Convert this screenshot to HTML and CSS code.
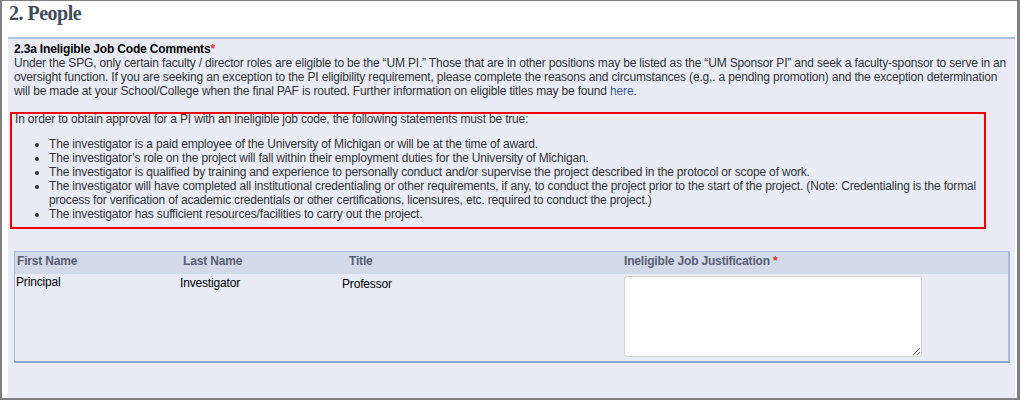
FILE: index.html
```html
<!DOCTYPE html>
<html>
<head>
<meta charset="utf-8">
<link rel="stylesheet" href="styles.css">
</head>
<body>
<div class="frame">
  <h2 class="page-title">2. People</h2>
  <div class="panel">
    <div class="q-title">2.3a Ineligible Job Code Comments<span class="req">*</span></div>
    <p class="q-desc">Under the SPG, only certain faculty / director roles are eligible to be the “UM PI.” Those that are in other positions may be listed as the “UM Sponsor PI” and seek a faculty-sponsor to serve in an oversight function. If you are seeking an exception to the PI eligibility requirement, please complete the reasons and circumstances (e.g,. a pending promotion) and the exception determination will be made at your School/College when the final PAF is routed. Further information on eligible titles may be found <a class="link" href="#">here</a>.</p>
    <div class="notice">
      <div class="notice-intro">In order to obtain approval for a PI with an ineligible job code, the following statements must be true:</div>
      <ul class="notice-list">
        <li>The investigator is a paid employee of the University of Michigan or will be at the time of award.</li>
        <li>The investigator’s role on the project will fall within their employment duties for the University of Michigan.</li>
        <li>The investigator is qualified by training and experience to personally conduct and/or supervise the project described in the protocol or scope of work.</li>
        <li>The investigator will have completed all institutional credentialing or other requirements, if any, to conduct the project prior to the start of the project. (Note: Credentialing is the formal process for verification of academic credentials or other certifications, licensures, etc. required to conduct the project.)</li>
        <li>The investigator has sufficient resources/facilities to carry out the project.</li>
      </ul>
    </div>
    <div class="grid">
      <div class="grid-head">
        <div class="th">First Name</div>
        <div class="th">Last Name</div>
        <div class="th">Title</div>
        <div class="th">Ineligible Job Justification <span class="req">*</span></div>
      </div>
      <div class="grid-row">
        <div class="td">Principal</div>
        <div class="td td-2">Investigator</div>
        <div class="td td-3">Professor</div>
        <div class="td-area"><textarea class="justify"></textarea></div>
      </div>
    </div>
  </div>
</div>
</body>
</html>
```
FILE: styles.css
```css
html, body {
  margin: 0;
  padding: 0;
  background: #ffffff;
}

.frame {
  width: 1020px;
  height: 400px;
  box-sizing: border-box;
  border-style: solid;
  border-color: #7f7f7f;
  border-width: 1px 3px 2px 2px;
  padding: 0 2px 0 6px;
  display: flex;
  flex-direction: column;
  background: #ffffff;
  font-family: "Liberation Sans", Arial, sans-serif;
  font-size: 12px;
  letter-spacing: -0.17px;
  color: #333333;
}

.page-title {
  margin: 1px 0 12px 0;
  padding-left: 1px;
  font-family: "Liberation Serif", "Times New Roman", serif;
  font-size: 20px;
  line-height: 23px;
  font-weight: bold;
  letter-spacing: -0.5px;
  color: #3f4b5d;
}

.panel {
  flex: 1;
  background: #e9ecf7;
  border-top: 2px solid #adc1e6;
  padding: 3px 5px 0 6px;
}

.q-title {
  font-weight: bold;
  color: #000000;
}

.req {
  color: #e8302f;
  font-weight: bold;
}

.q-desc {
  margin: 0;
  color: #333333;
}

.link {
  color: #3b5b9c;
  text-decoration: none;
}

.notice {
  margin: 14px 0 0 -4px;
  width: 976px;
  box-sizing: border-box;
  border: 2px solid #f00000;
  padding: 0 2px 0 3px;
  color: #333333;
}

.notice-intro {
  margin-top: -2px;
}

.notice-list {
  margin: 11px 0 6px 0;
  padding-left: 34px;
}

.grid {
  margin-top: 22px;
  border: 1px solid #a7bbdf;
  border-right: 2px solid #a7bbdf;
  border-bottom: 2px solid #8fa3c8;
}

.grid-head {
  display: grid;
  grid-template-columns: 166px 166px 275px 1fr;
  height: 22px;
  box-sizing: border-box;
  padding: 2px 0 0 2px;
  background: #d1dae6;
}

.th {
  font-weight: bold;
  color: #5a5f76;
}

.grid-row {
  display: grid;
  grid-template-columns: 164px 162px 282px 1fr;
  padding: 1px 0 4px 1px;
}

.td {
  color: #000000;
}

.td-2 {
  padding-top: 1px;
}

.td-3 {
  padding-top: 2px;
}

.td-area {
  padding-top: 1px;
}

.justify {
  display: block;
  width: 298px;
  height: 81px;
  box-sizing: border-box;
  margin: 0;
  border: 1px solid #d0d0d0;
  border-radius: 3px;
  box-shadow: 0 0 1px #dddddd;
  background: #ffffff;
  font-family: "Liberation Sans", Arial, sans-serif;
  font-size: 12px;
}
```
